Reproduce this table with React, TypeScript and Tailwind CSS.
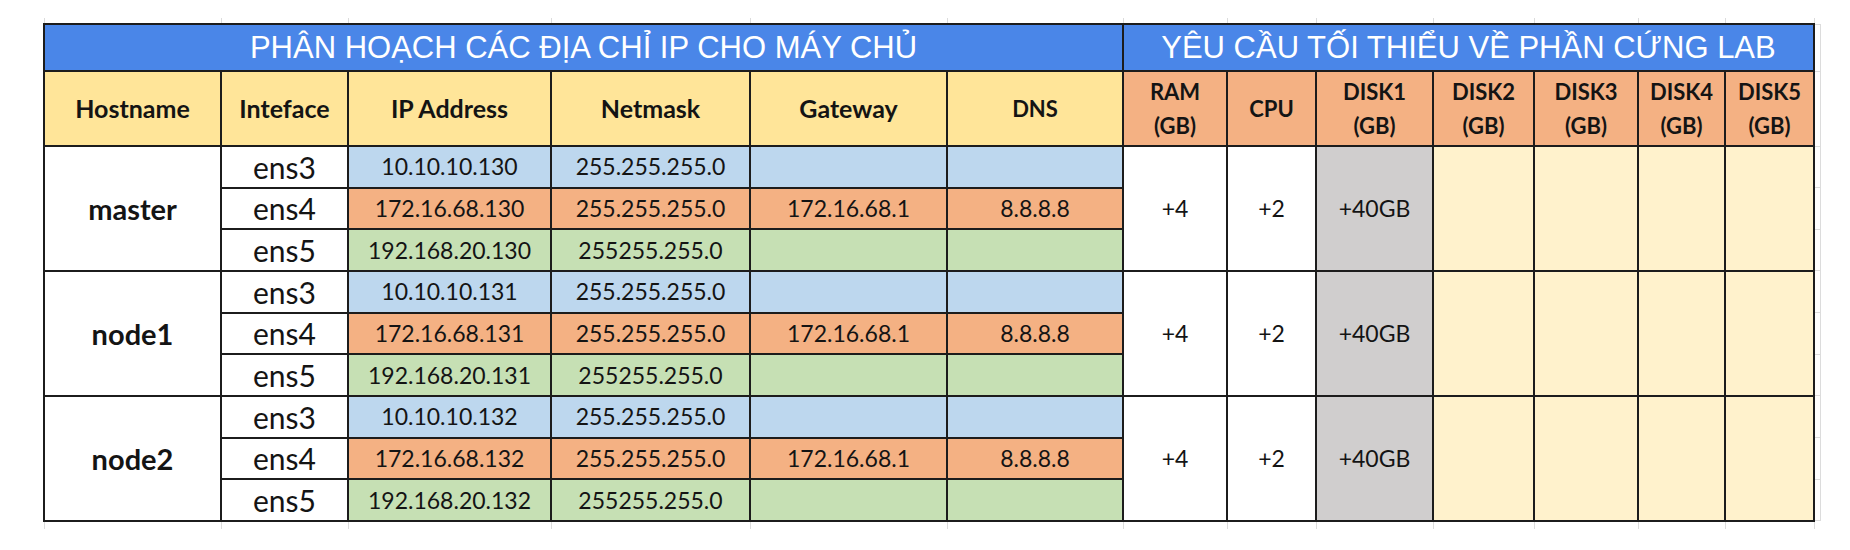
import React from "react";

const cols = [177, 127, 203, 199, 197, 176, 104, 89, 117, 101, 104, 87, 89];

const hosts = [
  { name: "master", n: "130" },
  { name: "node1", n: "131" },
  { name: "node2", n: "132" },
];

const ifaces = [
  { id: "ens3", bg: "bg-[#bdd7ee]", ip: "10.10.10.", mask: "255.255.255.0", gw: "", dns: "" },
  { id: "ens4", bg: "bg-[#f4b183]", ip: "172.16.68.", mask: "255.255.255.0", gw: "172.16.68.1", dns: "8.8.8.8" },
  { id: "ens5", bg: "bg-[#c6e0b4]", ip: "192.168.20.", mask: "255255.255.0", gw: "", dns: "" },
];

const cell = "border-2 border-[#1c1c1c] text-center align-middle p-0";
const grid = "border border-[#dcdcdc]";

const App: React.FC = () => {
  return (
    <div className="w-[1850px] h-[550px] bg-white pl-[43px] pt-[18px] font-['Lato',sans-serif] text-[#141414]">
      <table className="table-fixed border-collapse w-[1776px]">
        <colgroup>
          {cols.map((w, i) => (
            <col key={i} style={{ width: w }} />
          ))}
          <col style={{ width: 6 }} />
        </colgroup>
        <tbody>
          {/* spreadsheet gridlines above the table */}
          <tr className="h-[6px]">
            {cols.map((_, i) => (
              <td key={i} className="border-x border-[#dcdcdc] p-0" />
            ))}
            <td className="p-0" />
          </tr>
          <tr className="h-[47px]">
            <td
              colSpan={6}
              className={`${cell} bg-[#4a86e8] text-white font-['Liberation_Sans',sans-serif] text-[31px] leading-none`}
            >
              PHÂN HOẠCH CÁC ĐỊA CHỈ IP CHO MÁY CHỦ
            </td>
            <td
              colSpan={7}
              className={`${cell} bg-[#4a86e8] text-white font-['Liberation_Sans',sans-serif] text-[31px] leading-none`}
            >
              YÊU CẦU TỐI THIỂU VỀ PHẦN CỨNG LAB
            </td>
            <td className={`${grid} border-l-0 p-0`} />
          </tr>
          <tr className="h-[75px]">
            {["Hostname", "Inteface", "IP Address", "Netmask", "Gateway"].map((h) => (
              <td key={h} className={`${cell} bg-[#ffe599] font-bold text-[25px]`}>
                {h}
              </td>
            ))}
            <td className={`${cell} bg-[#ffe599] font-bold text-[22px]`}>DNS</td>
            <td className={`${cell} bg-[#f4b183] font-bold text-[22px] leading-[34px]`}>
              RAM
              <br />
              (GB)
            </td>
            <td className={`${cell} bg-[#f4b183] font-bold text-[22px]`}>CPU</td>
            {[1, 2, 3, 4, 5].map((d) => (
              <td key={d} className={`${cell} bg-[#f4b183] font-bold text-[22px] leading-[34px]`}>
                DISK{d}
                <br />
                (GB)
              </td>
            ))}
            <td className={`${grid} border-l-0 p-0`} />
          </tr>
          {hosts.map((host) =>
            ifaces.map((f, r) => (
              <tr key={host.name + f.id} className="h-[41.67px]">
                {r === 0 && (
                  <td rowSpan={3} className={`${cell} bg-white font-bold text-[29px]`}>
                    {host.name}
                  </td>
                )}
                <td className={`${cell} bg-white text-[30px] leading-none`}>{f.id}</td>
                <td className={`${cell} ${f.bg} text-[23px] leading-none`}>{f.ip + host.n}</td>
                <td className={`${cell} ${f.bg} text-[23px] leading-none`}>{f.mask}</td>
                <td className={`${cell} ${f.bg} text-[23px] leading-none`}>{f.gw}</td>
                <td className={`${cell} ${f.bg} text-[23px] leading-none`}>{f.dns}</td>
                {r === 0 && (
                  <>
                    <td rowSpan={3} className={`${cell} bg-white text-[23px]`}>+4</td>
                    <td rowSpan={3} className={`${cell} bg-white text-[23px]`}>+2</td>
                    <td rowSpan={3} className={`${cell} bg-[#d0cece] text-[23px]`}>+40GB</td>
                    <td rowSpan={3} className={`${cell} bg-[#fff2cc]`} />
                    <td rowSpan={3} className={`${cell} bg-[#fff2cc]`} />
                    <td rowSpan={3} className={`${cell} bg-[#fff2cc]`} />
                    <td rowSpan={3} className={`${cell} bg-[#fff2cc]`} />
                  </>
                )}
                <td className={`${grid} border-l-0 p-0`} />
              </tr>
            ))
          )}
          {/* spreadsheet gridlines below the table */}
          <tr className="h-[8px]">
            {cols.map((_, i) => (
              <td key={i} className="border-x border-[#dcdcdc] p-0" />
            ))}
            <td className="p-0" />
          </tr>
        </tbody>
      </table>
    </div>
  );
};

export default App;
